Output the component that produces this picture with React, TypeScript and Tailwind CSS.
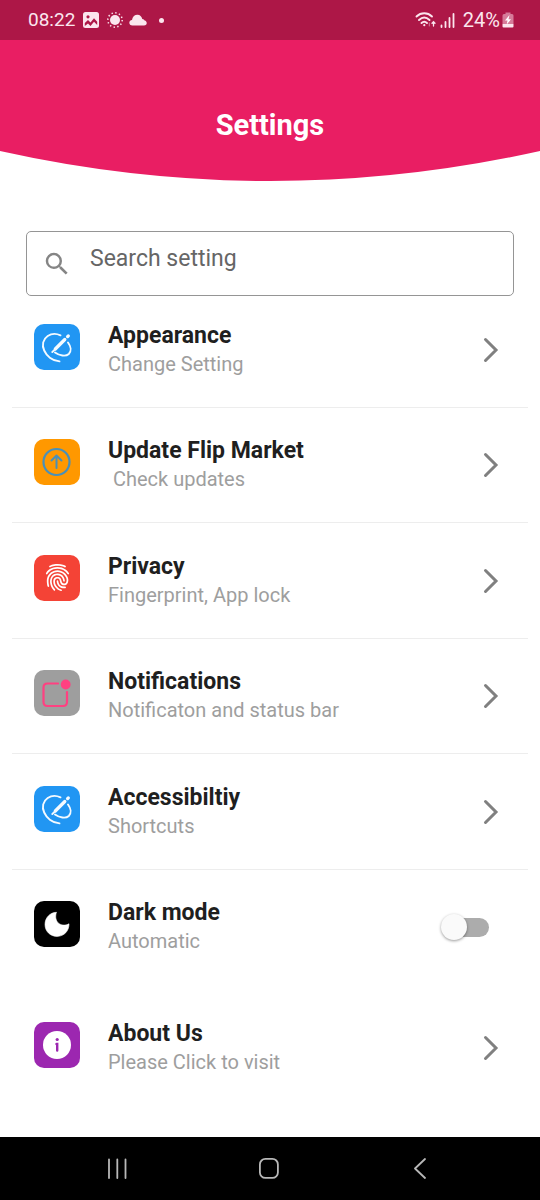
import { useState, type ReactNode } from "react";
import { IoMdFingerPrint } from "react-icons/io";
import { MdSearch } from "react-icons/md";

type Setting = {
  title: string;
  subtitle: string;
  tile: string;
  icon: ReactNode;
};

const PencilIcon = () => (
  <svg viewBox="0 0 46 46" className="size-full" fill="none" stroke="#f4faff" strokeLinecap="round">
    <path d="M26.500 11.300C22.500 9.500 17.500 9.500 13.700 12C9 15.200 7.600 21 10.200 26.500C12.800 32.300 18.500 37 25.500 37.400" strokeWidth="1.900" />
    <path d="M34 18.500C37 22.500 37.600 27.200 34.800 30C31.500 33 25.500 31.600 21 28.500" strokeWidth="1.900" />
    <path d="M21.300 25L30.800 15.500" strokeWidth="3.300" />
    <path d="M18.300 28L20.800 25.600" strokeWidth="1.900" />
    <path d="M33.600 12.600L34.300 11.900" strokeWidth="3.300" />
  </svg>
);

const UpdateIcon = () => (
  <svg viewBox="0 0 46 46" className="size-full" fill="none" stroke="#4a90b8" strokeLinecap="round" strokeLinejoin="round">
    <circle cx="22.500" cy="23" r="13" strokeWidth="2.200" />
    <path d="M22.500 29V17M17.500 21.500L22.500 16.500L27.500 21.500" strokeWidth="2" />
  </svg>
);

const BadgeIcon = () => (
  <svg viewBox="0 0 46 46" className="size-full" fill="none" stroke="#ff4081" strokeLinecap="round">
    <path d="M24 13.500H13.500Q9.500 13.500 9.500 17.500V32Q9.500 36 13.500 36H29Q33 36 33 32V22" strokeWidth="2.200" />
    <circle cx="31.700" cy="14.500" r="4.900" fill="#ff4081" stroke="none" />
  </svg>
);

const MoonIcon = () => (
  <svg viewBox="0 0 46 46" className="size-full" fill="#fff">
    <path d="M22.500 11.300C21.300 14.500 21.300 18.600 23.800 21.500C26.500 24.500 31.500 24.900 35 22.800C35.200 29.700 30.200 35.400 23 35.400C16.200 35.400 11 30.200 11 23.500C11 16.800 16 11.400 22.500 11.300Z" stroke="#fff" strokeWidth=".6" strokeLinejoin="round" />
  </svg>
);

const InfoIcon = () => (
  <svg viewBox="0 0 46 46" className="size-full">
    <circle cx="23" cy="23" r="14" fill="#fff" />
    <circle cx="23.200" cy="17.500" r="1.600" fill="#9c27b0" />
    <path d="M22.500 22H23.200V28.500" fill="none" stroke="#9c27b0" strokeWidth="2.400" strokeLinecap="round" />
  </svg>
);

const Chevron = () => (
  <svg viewBox="0 0 16 26" className="h-[26px] w-4" fill="none" stroke="#808080" strokeWidth="3" strokeLinecap="round">
    <path d="M2.500 2.500L13 13L2.500 23.500" />
  </svg>
);

const settings: Setting[] = [
  { title: "Appearance", subtitle: "Change Setting", tile: "bg-[#2196f3]", icon: <PencilIcon /> },
  { title: "Update Flip Market", subtitle: " Check updates", tile: "bg-[#ff9800]", icon: <UpdateIcon /> },
  { title: "Privacy", subtitle: "Fingerprint, App lock", tile: "bg-[#f44336]", icon: <IoMdFingerPrint className="size-[31px] text-white" /> },
  { title: "Notifications", subtitle: "Notificaton and status bar", tile: "bg-[#9e9e9e]", icon: <BadgeIcon /> },
  { title: "Accessibiltiy", subtitle: "Shortcuts", tile: "bg-[#2196f3]", icon: <PencilIcon /> },
];

function RowContent({ title, subtitle, tile, icon, trailing }: Setting & { trailing: ReactNode }) {
  return (
    <span className="flex h-14 w-full items-start gap-7 pr-[29px] pl-[22px] text-left">
      <span className={`mt-0.5 flex size-[46px] shrink-0 items-center justify-center rounded-[10px] ${tile}`}>{icon}</span>
      <span className="flex min-w-0 flex-1 flex-col whitespace-pre">
        <span className="text-[23px] leading-7 font-bold text-[#1f1f1f]">{title}</span>
        <span className="text-[20px] leading-7 text-[#9e9e9e]">{subtitle}</span>
      </span>
      <span className="flex h-full shrink-0 items-center">{trailing}</span>
    </span>
  );
}

function StatusBar() {
  return (
    <div className="flex h-10 items-center justify-between bg-[#ad1747] pr-[26px] pl-7 text-[20px] text-[#fbe6ee]">
      <div className="flex items-center gap-2">
        <span className="text-[19px]">08:22</span>
        <svg viewBox="0 0 16 16" className="size-4">
          <rect width="16" height="16" rx="2.500" fill="#fbe6ee" />
          <circle cx="5" cy="4.800" r="1.600" fill="#ad1747" />
          <path d="M1.800 11L5 8L7.500 10.500L11 6.300L14.200 9.800V13L11 9.800L7.500 14L5 11.500L1.800 14Z" fill="#ad1747" />
        </svg>
        <svg viewBox="0 0 16 16" className="size-4" fill="#fbe6ee" stroke="#fbe6ee" strokeWidth="1.500">
          <circle cx="8" cy="8" r="5" stroke="none" />
          <circle cx="8" cy="8" r="7.200" fill="none" strokeDasharray="1.400 2.370" />
        </svg>
        <svg viewBox="0 0 18 12" className="-ml-0.5 h-3 w-[18px]" fill="#fbe6ee">
          <path d="M3.500 11.500C-.5 11.500-.8 6.500 3 6C3.500 2.500 6 .7 8.500 .8C11 .9 12.600 2.500 13.300 4.900C14.500 5 15.300 5.700 15.600 6.600C18.600 7.200 18.500 11.500 15 11.500Z" />
        </svg>
        <span className="ml-1 size-[5px] rounded-full bg-[#fbe6ee]" />
      </div>
      <div className="flex items-center gap-1">
        <svg viewBox="0 0 22 18" className="h-[18px] w-[22px]" fill="none" stroke="#fbe6ee" strokeWidth="1.900" strokeLinecap="round">
          <path d="M2.500 5.500C7 1.200 13.500 1.200 18 5.500M5 9C8.500 5.700 12 5.700 15.500 9M7.500 12C9.200 10.400 11.300 10.400 13 12" />
          <circle cx="10.300" cy="14.200" r="1.100" fill="#fbe6ee" stroke="none" />
          <path d="M15.300 12V15" strokeWidth="1" opacity=".5" />
          <path d="M19.500 15V11M18 12.200L19.500 10.700L21 12.200" strokeWidth="1.300" />
        </svg>
        <svg viewBox="0 0 15 15" className="h-[15px] w-[15px]" stroke="#fbe6ee" strokeWidth="1.800" strokeLinecap="round">
          <path d="M1.500 12.500V14M5.500 9V14M9.500 5V14M13.500 1V14" />
        </svg>
        <span className="ml-1 flex items-center">
          24%
          <svg viewBox="0 0 12 16" className="ml-0.5 h-4 w-3">
            <path d="M3.500 2V.5H8.500V2H10Q11.500 2 11.500 3.500V12H.5V3.500Q.5 2 2 2Z" fill="#d67b99" />
            <path d="M.5 12H11.500V14.500Q11.500 15.500 10.500 15.500H1.500Q.5 15.500 .5 14.500Z" fill="#fbe6ee" />
            <path d="M7.500 3L3 8.500H5.500L4.700 12.500L9 7.300H6.500Z" fill="#fff" />
          </svg>
        </span>
      </div>
    </div>
  );
}

export default function App() {
  const [dark, setDark] = useState(false);

  return (
    <div className="flex min-h-screen flex-col bg-white font-[Roboto,sans-serif]">
      <StatusBar />
      <header className="bg-[#e91e63] pt-[65px] pb-[6px]">
        <h1 className="text-center text-[29px] leading-10 font-bold text-white">Settings</h1>
      </header>
      <svg viewBox="0 0 540 30" preserveAspectRatio="none" className="h-[30px] w-full shrink-0" fill="#e91e63">
        <path d="M0 0Q270 60 540 0Z" />
      </svg>

      <main className="flex flex-1 flex-col pt-[50px]">
        <label className="mx-[26px] flex h-[65px] shrink-0 items-center rounded-[5px] border border-[#959595] pl-[15px]">
          <MdSearch className="size-[30px] shrink-0 text-[#858585]" />
          <input
            type="text"
            aria-label="Search setting"
            placeholder="Search setting"
            className="ml-[18px] min-w-0 flex-1 bg-transparent pb-[10px] text-[23px] leading-7 text-[#333] outline-none placeholder:text-[#666]"
          />
        </label>

        <ul className="mx-3 mt-[26px] flex flex-1 flex-col">
          {settings.map((s) => (
            <li key={s.title} className="min-h-[115px] flex-1">
              <button type="button" className="flex h-[86px] w-full items-start border-b border-[#ededed]">
                <RowContent {...s} trailing={<Chevron />} />
              </button>
            </li>
          ))}
          <li className="h-[121px] shrink-0">
            <label className="block">
              <RowContent
                title="Dark mode"
                subtitle="Automatic"
                tile="bg-black"
                icon={<MoonIcon />}
                trailing={
                  <span className="relative mr-2.5 flex h-7 w-12 items-center">
                    <input
                      type="checkbox"
                      role="switch"
                      aria-label="Dark mode"
                      checked={dark}
                      onChange={(e) => setDark(e.target.checked)}
                      className="peer ml-1 h-[19px] w-11 appearance-none rounded-full bg-[#acacac] checked:bg-[#f48fb1]"
                    />
                    <span className="pointer-events-none absolute top-px left-0 size-[26px] rounded-full bg-[#fafafa] shadow-[0_1px_3px_rgba(0,0,0,0.4)] peer-checked:left-[22px] peer-checked:bg-[#e91e63]" />
                  </span>
                }
              />
            </label>
          </li>
          <li className="h-[117px] shrink-0">
            <button type="button" className="flex w-full">
              <RowContent
                title="About Us"
                subtitle="Please Click to visit"
                tile="bg-[#9c27b0]"
                icon={<InfoIcon />}
                trailing={<Chevron />}
              />
            </button>
          </li>
        </ul>
      </main>

      <nav className="flex h-[63px] shrink-0 items-center justify-around bg-black px-[42px]">
        <button type="button" aria-label="Recent apps">
          <svg viewBox="0 0 22 22" className="size-[22px]" stroke="#b8b8b8" strokeWidth="1.800" strokeLinecap="round">
            <path d="M2 1.500V20M10.300 1.500V20M18.500 1.500V20" />
          </svg>
        </button>
        <button type="button" aria-label="Home">
          <svg viewBox="0 0 22 22" className="size-[22px]" fill="none" stroke="#b8b8b8" strokeWidth="1.800">
            <rect x="0.900" y="0.900" width="18" height="19" rx="5.500" />
          </svg>
        </button>
        <button type="button" aria-label="Back">
          <svg viewBox="0 0 22 22" className="size-[22px]" fill="none" stroke="#b8b8b8" strokeWidth="1.800" strokeLinecap="round" strokeLinejoin="round">
            <path d="M14 1L4 10.500L14 20" />
          </svg>
        </button>
      </nav>
    </div>
  );
}
